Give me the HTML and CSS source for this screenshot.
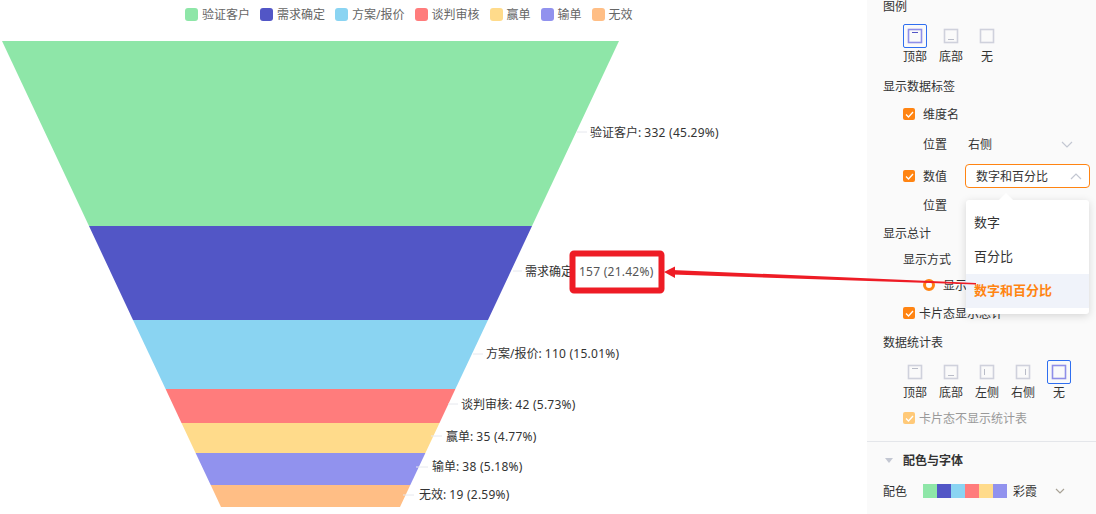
FILE: index.html
```html
<!DOCTYPE html>
<html lang="zh">
<head>
  <meta charset="UTF-8" />
  <title>漏斗图</title>
  <link rel="stylesheet" href="styles.css">
</head>
<body>

  <!-- CHART -->
  <main class="chart">
    <div class="legend">
      <span class="legend-item"><i class="c1"></i>验证客户</span>
      <span class="legend-item"><i class="c2"></i>需求确定</span>
      <span class="legend-item"><i class="c3"></i>方案/报价</span>
      <span class="legend-item"><i class="c4"></i>谈判审核</span>
      <span class="legend-item"><i class="c5"></i>赢单</span>
      <span class="legend-item"><i class="c6"></i>输单</span>
      <span class="legend-item"><i class="c7"></i>无效</span>
    </div>
    <svg class="funnel" width="867" height="514" viewBox="0 0 867 514">
      <polygon fill="#8ee6a8" points="2,41 619,41 532,226 89,226" />
      <polygon fill="#5256c6" points="89,226 532,226 488,320 133,320" />
      <polygon fill="#8ad4f2" points="133,320 488,320 455.4,389 165.6,389" />
      <polygon fill="#ff7c7c" points="165.6,389 455.4,389 439.5,423 181.5,423" />
      <polygon fill="#ffdb8b" points="181.5,423 439.5,423 425.4,453 195.6,453" />
      <polygon fill="#9192ee" points="195.6,453 425.4,453 410.3,485 210.7,485" />
      <polygon fill="#ffbe85" points="210.7,485 410.3,485 400,507 221,507" />
      <g class="leader">
        <line x1="577" y1="132" x2="587" y2="132" />
        <line x1="513" y1="271" x2="522" y2="271" />
        <line x1="473" y1="354" x2="483" y2="354" />
        <line x1="448" y1="404" x2="458" y2="404" />
        <line x1="431" y1="436" x2="442" y2="436" />
        <line x1="416" y1="467" x2="428" y2="467" />
        <line x1="403" y1="495" x2="414" y2="495" />
      </g>
      <g class="label">
        <text x="590" y="137">验证客户: <tspan class="num">332 (45.29%)</tspan></text>
        <text x="525" y="276">需求确定:</text>
        <text x="486" y="358">方案/报价: <tspan class="num">110 (15.01%)</tspan></text>
        <text x="461" y="409">谈判审核: <tspan class="num">42 (5.73%)</tspan></text>
        <text x="446" y="441">赢单: <tspan class="num">35 (4.77%)</tspan></text>
        <text x="432" y="471">输单: <tspan class="num">38 (5.18%)</tspan></text>
        <text x="419" y="499">无效: <tspan class="num">19 (2.59%)</tspan></text>
      </g>
    </svg>
  </main>

  <!-- SETTINGS PANEL -->
  <aside class="panel">
    <div class="row first">图例</div>
    <div class="choices">
      <div class="choice"><span class="box on"><svg width="16" height="16" viewBox="0 0 16 16"><rect x="1.5" y="1.5" width="13" height="13" /><line x1="5" y1="4.5" x2="11" y2="4.5" /></svg></span>顶部</div>
      <div class="choice"><span class="box"><svg width="16" height="16" viewBox="0 0 16 16"><rect x="1.5" y="1.5" width="13" height="13" /><line x1="5" y1="11.5" x2="11" y2="11.5" /></svg></span>底部</div>
      <div class="choice"><span class="box"><svg width="16" height="16" viewBox="0 0 16 16"><rect x="1.5" y="1.5" width="13" height="13" /></svg></span>无</div>
    </div>

    <div class="row h32">显示数据标签</div>
    <div class="row h24 indent"><span class="check"><svg width="9" height="7" viewBox="0 0 9 7"><path d="M1 3.5 3.5 6 8 1" /></svg></span><span class="after-check">维度名</span></div>
    <div class="row h36 pos">
      <span class="pos-name">位置</span><span>右侧</span>
      <svg class="chev" width="12" height="7" viewBox="0 0 12 7"><path d="M1 1 6 6 11 1" /></svg>
    </div>
    <div class="row h28 indent">
      <span class="check"><svg width="9" height="7" viewBox="0 0 9 7"><path d="M1 3.5 3.5 6 8 1" /></svg></span><span class="after-check">数值</span>
      <div class="select">数字和百分比
        <svg class="chev" width="12" height="7" viewBox="0 0 12 7"><path d="M1 6 6 1 11 6" /></svg>
      </div>
    </div>
    <div class="row h30 pos"><span class="pos-name">位置</span></div>
    <div class="row h26">显示总计</div>
    <div class="row h26 indent">显示方式</div>
    <div class="row h26 radio-row"><span class="radio"></span>显示</div>
    <div class="row h30 indent"><span class="check"><svg width="9" height="7" viewBox="0 0 9 7"><path d="M1 3.5 3.5 6 8 1" /></svg></span><span class="card-text">卡片态显示总计</span></div>
    <div class="row h28">数据统计表</div>
    <div class="choices second">
      <div class="choice"><span class="box"><svg width="16" height="16" viewBox="0 0 16 16"><rect x="1.5" y="1.5" width="13" height="13" /><line x1="5" y1="4.5" x2="11" y2="4.5" /></svg></span>顶部</div>
      <div class="choice"><span class="box"><svg width="16" height="16" viewBox="0 0 16 16"><rect x="1.5" y="1.5" width="13" height="13" /><line x1="5" y1="11.5" x2="11" y2="11.5" /></svg></span>底部</div>
      <div class="choice"><span class="box"><svg width="16" height="16" viewBox="0 0 16 16"><rect x="1.5" y="1.5" width="13" height="13" /><line x1="5.5" y1="5" x2="5.5" y2="11" /></svg></span>左侧</div>
      <div class="choice"><span class="box"><svg width="16" height="16" viewBox="0 0 16 16"><rect x="1.5" y="1.5" width="13" height="13" /><line x1="10.5" y1="5" x2="10.5" y2="11" /></svg></span>右侧</div>
      <div class="choice"><span class="box on"><svg width="16" height="16" viewBox="0 0 16 16"><rect x="1.5" y="1.5" width="13" height="13" /></svg></span>无</div>
    </div>
    <div class="row h24 indent muted"><span class="check faded"><svg width="9" height="7" viewBox="0 0 9 7"><path d="M1 3.5 3.5 6 8 1" /></svg></span><span class="card-text">卡片态不显示统计表</span></div>
    <div class="divider"></div>
    <div class="row h36"><span class="caret"></span><b>配色与字体</b></div>
    <div class="row h26">
      <span>配色</span>
      <span class="palette"><i class="c1"></i><i class="c2"></i><i class="c3"></i><i class="c4"></i><i class="c5"></i><i class="c6"></i></span>
      <span class="palette-name">彩霞</span>
      <svg class="chev small" width="10" height="6" viewBox="0 0 10 6"><path d="M1 1 5 5 9 1" /></svg>
    </div>

    <!-- open dropdown -->
    <div class="dropdown">
      <div class="option">数字</div>
      <div class="option">百分比</div>
      <div class="option active">数字和百分比</div>
    </div>
  </aside>

  <!-- ANNOTATION -->
  <svg class="annotation" width="1096" height="514" viewBox="0 0 1096 514">
    <rect class="note-box" x="572.5" y="253.5" width="89" height="37" rx="1.5" />
    <text class="note-text" x="579" y="276">157 (21.42%)</text>
    <polygon class="note-line" points="672,270 672,274.5 976,284.5 976,283" />
    <polygon class="note-line" points="664,272 675,266.5 675,278" />
  </svg>

</body>
</html>
```

FILE: styles.css
```css
/* RESET */
* {
  margin: 0;
  padding: 0;
  box-sizing: border-box;
}

html, body {
  width: 100%;
  height: 100%;
  overflow: hidden;
}

body {
  display: flex;
  position: relative;
  background: #fff;
  color: #333;
  font-family: 'Noto Sans', 'Noto Sans CJK SC', sans-serif;
  font-size: 12px;
}

.c1 { background: #8ee6a8; }
.c2 { background: #5256c6; }
.c3 { background: #8ad4f2; }
.c4 { background: #ff7c7c; }
.c5 { background: #ffdb8b; }
.c6 { background: #9192ee; }
.c7 { background: #ffbe85; }

/* CHART */
.chart {
  position: relative;
  width: 867px;
  flex: none;
}

.legend {
  display: flex;
  gap: 10px;
  height: 28px;
  padding-left: 185px;
  align-items: center;
  color: #666;
  line-height: 17px;
}

.legend-item {
  display: flex;
  align-items: center;
  gap: 4px;
  white-space: nowrap;
}

.legend-item i {
  width: 13px;
  height: 13px;
  border-radius: 3px;
}

.funnel {
  position: absolute;
  top: 0;
  left: 0;
}

.leader line {
  stroke: #e6e8ee;
  stroke-width: 1;
}

.label text {
  fill: #333;
  font-size: 12px;
}

.num {
  letter-spacing: 0.25px;
}

/* PANEL */
.panel {
  position: relative;
  flex: 1;
  background: #fafafa;
  padding-left: 16px;
  overflow: hidden;
}

.row {
  display: flex;
  align-items: center;
  white-space: nowrap;
}

.first {
  height: 14px;
  line-height: 14px;
}

.h24 { height: 24px; }
.h26 { height: 26px; }
.h28 { height: 28px; }
.h30 { height: 30px; }
.h32 { height: 32px; }
.h36 { height: 36px; }

.indent {
  padding-left: 20px;
}

.choices {
  display: flex;
  gap: 12px;
  margin-top: 10px;
  padding-left: 20px;
  height: 46px;
}

.choices.second {
  margin-top: 4px;
}

.choice {
  display: flex;
  flex-direction: column;
  align-items: center;
  width: 24px;
  line-height: 17px;
  white-space: nowrap;
}

.box {
  display: flex;
  align-items: center;
  justify-content: center;
  width: 24px;
  height: 24px;
  border: 1px solid transparent;
  border-radius: 2px;
}

.box svg {
  fill: none;
  stroke: #cfd1dc;
  stroke-width: 1.6;
}

.box line {
  stroke-width: 1;
  stroke: #b9bcc8;
}

.box.on {
  border-color: #2f6ff0;
}

.box.on svg {
  stroke: #8f8fe8;
}

.box.on line {
  stroke: #5256c6;
}

.check {
  display: flex;
  align-items: center;
  justify-content: center;
  width: 12px;
  height: 12px;
  flex: none;
  background: #ff8412;
  border-radius: 2px;
}

.check svg {
  fill: none;
  stroke: #fff;
  stroke-width: 1.3;
}

.check.faded {
  background: #ffc978;
}

.after-check {
  margin-left: 8px;
}

.card-text {
  margin-left: 4px;
}

.pos {
  padding-left: 40px;
}

.pos-name {
  width: 45px;
}

.chev {
  fill: none;
  stroke: #c3c7d2;
  stroke-width: 1.2;
}

.pos .chev {
  margin-left: 69px;
}

.select {
  display: flex;
  align-items: center;
  justify-content: space-between;
  width: 125px;
  height: 24px;
  margin-left: 18px;
  padding: 0 7px 0 10px;
  background: #fff;
  border: 1px solid #ff8412;
  border-radius: 4px;
}

.radio-row {
  padding-left: 40px;
}

.radio {
  width: 12px;
  height: 12px;
  margin-right: 8px;
  flex: none;
  background: #fff;
  border: 3px solid #ff8412;
  border-radius: 50%;
}

.muted {
  color: #999;
}

.divider {
  height: 1px;
  margin: 11px 0 0 -16px;
  background: #e4e6ea;
}

b {
  font-weight: 700;
}

.caret {
  width: 0;
  height: 0;
  margin: 0 10px 0 2px;
  border-left: 4px solid transparent;
  border-right: 4px solid transparent;
  border-top: 5px solid #c3c7d2;
}

.palette {
  display: flex;
  margin-left: 16px;
}

.palette i {
  width: 14px;
  height: 14px;
}

.palette-name {
  margin-left: 6px;
}

.chev.small {
  margin-left: 18px;
  stroke: #a8a296;
}

.dropdown {
  position: absolute;
  top: 200px;
  left: 99px;
  width: 123px;
  height: 114px;
  padding-top: 5px;
  background: #fff;
  border-radius: 3px;
  box-shadow: 0 2px 8px rgba(0, 0, 0, 0.15);
  font-size: 13px;
}

.dropdown::before {
  content: '';
  position: absolute;
  top: -5px;
  left: 35px;
  width: 10px;
  height: 10px;
  background: #fff;
  transform: rotate(45deg);
}

.option {
  position: relative;
  height: 34px;
  padding-left: 8px;
  line-height: 34px;
}

.option.active {
  margin-top: 1px;
  background: #f0f3fa;
  color: #ff8412;
  font-weight: 700;
  line-height: 32px;
}

/* ANNOTATION */
.annotation {
  position: absolute;
  top: 0;
  left: 0;
  pointer-events: none;
}

.note-box {
  fill: #fff;
  stroke: #ee1c25;
  stroke-width: 6;
}

.note-text {
  fill: #555;
  font-size: 12px;
  letter-spacing: 0.25px;
}

.note-line {
  fill: #ee1c25;
}
```
